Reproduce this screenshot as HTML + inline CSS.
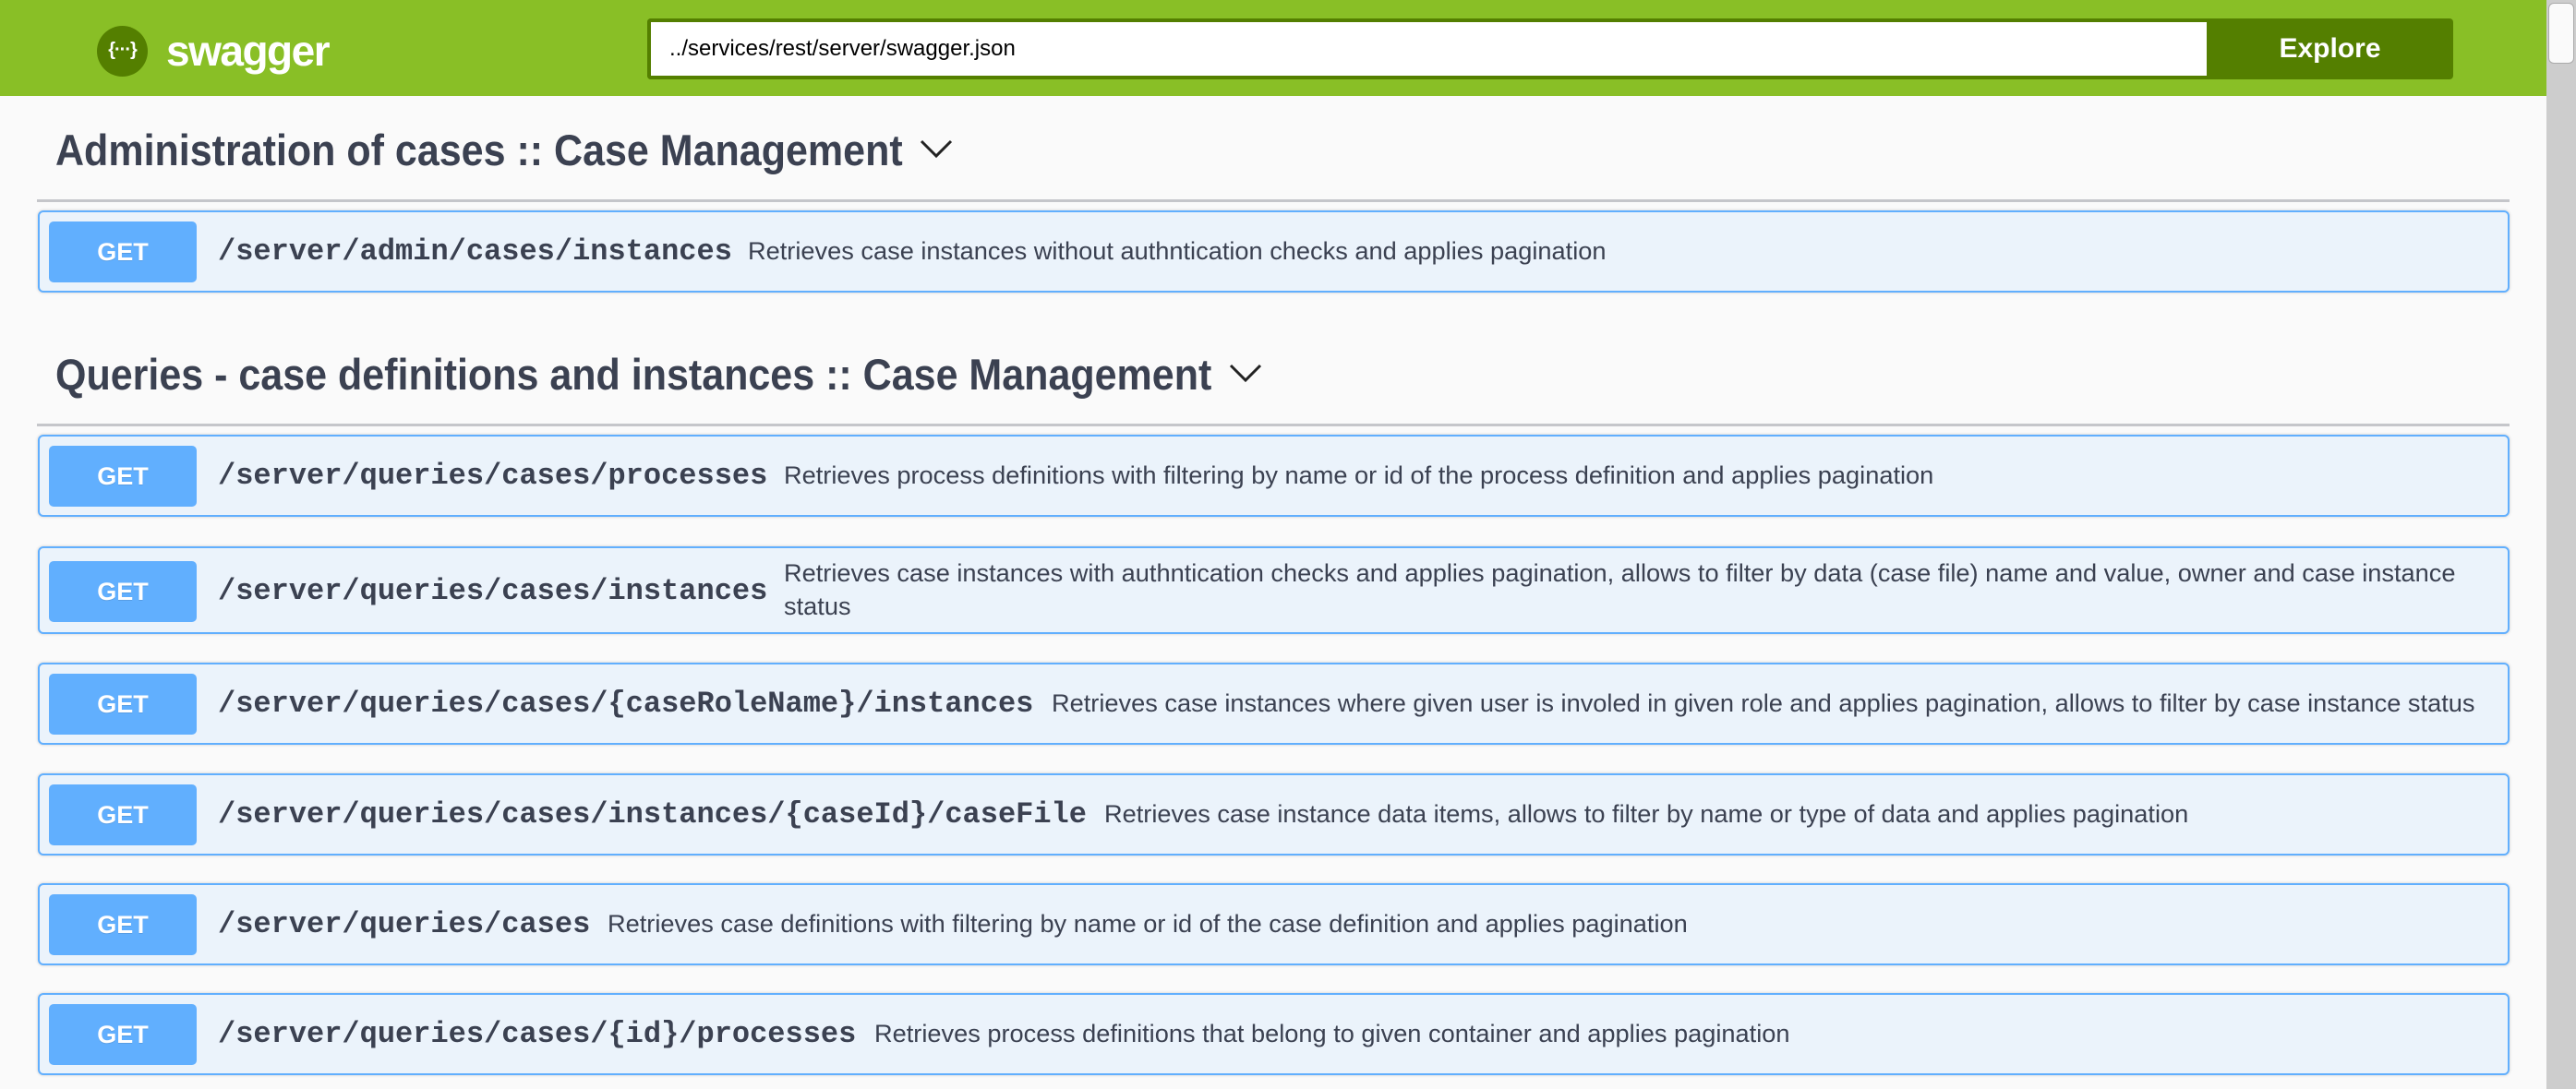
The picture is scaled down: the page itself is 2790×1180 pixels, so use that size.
<!DOCTYPE html>
<html><head><meta charset="utf-8"><style>
*{margin:0;padding:0;box-sizing:border-box}
body{width:2790px;height:1180px;background:#fafafa;position:relative;overflow:hidden;font-family:"Liberation Sans",sans-serif;color:#3b4151}
.hdr{position:absolute;left:0;top:0;width:2758px;height:104px;background:#89bf26}
.logo{position:absolute;left:105px;top:28px;width:55px;height:55px;border-radius:50%;background:#547f00;color:#fff;font-size:20px;font-weight:bold;text-align:center;line-height:53px;letter-spacing:-1px}
.sw{position:absolute;left:180px;top:28px;font-size:46px;font-weight:bold;color:#fff;letter-spacing:-1.5px}
.inp{position:absolute;left:701px;top:20px;width:1689px;height:66px;border:4px solid #547f00;border-right:none;border-radius:4px 0 0 4px;background:#fff;font-size:24px;padding-left:20px;line-height:58px;color:#000}
.btn{position:absolute;left:2390px;top:20px;width:267px;height:66px;background:#547f00;border-radius:0 4px 4px 0;color:#fff;font-size:30px;font-weight:bold;text-align:center;line-height:66px}
.scroll{position:absolute;left:2758px;top:0;width:32px;height:1180px;background:#cdcdcd}
.thumb{position:absolute;left:2760px;top:3px;width:28px;height:66px;background:#fafafa;border:1px solid #aaa;border-radius:6px}
h2{position:absolute;left:60px;font-size:47px;font-weight:bold;white-space:nowrap;transform:scaleX(0.915);transform-origin:left top}
.chev{position:absolute;width:36px;height:22px}
.hr{position:absolute;left:40px;width:2678px;height:3px;background:#c5c6ca}
.op{position:absolute;left:41px;width:2677px;border:2px solid #61affe;border-radius:6px;background:#ebf3fb;box-shadow:0 0 3px rgba(0,0,0,.19)}
.get{position:absolute;left:10px;width:160px;height:66px;background:#61affe;border-radius:5px;color:#fff;font-weight:bold;font-size:27px;text-align:center;line-height:66px;text-shadow:0 1px 0 rgba(0,0,0,.1)}
.path{position:absolute;left:193px;font-family:"Liberation Mono",monospace;font-weight:bold;font-size:32px;white-space:nowrap}
.desc{position:absolute;font-size:27.2px;white-space:nowrap;line-height:36px}
</style></head><body>
<div class="hdr">
<div class="logo">{···}</div>
<div class="sw">swagger</div>
<div class="inp">../services/rest/server/swagger.json</div>
<div class="btn">Explore</div>
</div>
<div class="scroll"></div><div class="thumb"></div>

<h2 style="top:135px">Administration of cases :: Case Management</h2>
<svg class="chev" style="left:996px;top:150px" viewBox="0 0 36 22"><path d="M2 3 L18 19 L34 3" fill="none" stroke="#222" stroke-width="3"/></svg>
<div class="hr" style="top:216px"></div>

<div class="op" style="top:228px;height:89px"><div class="get" style="top:10px">GET</div><div class="path" style="top:24px">/server/admin/cases/instances</div><div class="desc" style="left:767px;top:24px">Retrieves case instances without authntication checks and applies pagination</div></div>

<h2 style="top:378px">Queries - case definitions and instances :: Case Management</h2>
<svg class="chev" style="left:1331px;top:393px" viewBox="0 0 36 22"><path d="M2 3 L18 19 L34 3" fill="none" stroke="#222" stroke-width="3"/></svg>
<div class="hr" style="top:459px"></div>

<div class="op" style="top:471px;height:89px"><div class="get" style="top:10px">GET</div><div class="path" style="top:24px">/server/queries/cases/processes</div><div class="desc" style="left:806px;top:24px">Retrieves process definitions with filtering by name or id of the process definition and applies pagination</div></div>

<div class="op" style="top:592px;height:95px"><div class="get" style="top:14px">GET</div><div class="path" style="top:28px">/server/queries/cases/instances</div><div class="desc" style="left:806px;top:9px">Retrieves case instances with authntication checks and applies pagination, allows to filter by data (case file) name and value, owner and case instance<br>status</div></div>

<div class="op" style="top:718px;height:89px"><div class="get" style="top:10px">GET</div><div class="path" style="top:24px">/server/queries/cases/{caseRoleName}/instances</div><div class="desc" style="left:1096px;top:24px">Retrieves case instances where given user is involed in given role and applies pagination, allows to filter by case instance status</div></div>

<div class="op" style="top:838px;height:89px"><div class="get" style="top:10px">GET</div><div class="path" style="top:24px">/server/queries/cases/instances/{caseId}/caseFile</div><div class="desc" style="left:1153px;top:24px">Retrieves case instance data items, allows to filter by name or type of data and applies pagination</div></div>

<div class="op" style="top:957px;height:89px"><div class="get" style="top:10px">GET</div><div class="path" style="top:24px">/server/queries/cases</div><div class="desc" style="left:615px;top:24px">Retrieves case definitions with filtering by name or id of the case definition and applies pagination</div></div>

<div class="op" style="top:1076px;height:89px"><div class="get" style="top:10px">GET</div><div class="path" style="top:24px">/server/queries/cases/{id}/processes</div><div class="desc" style="left:904px;top:24px">Retrieves process definitions that belong to given container and applies pagination</div></div>
</body></html>
